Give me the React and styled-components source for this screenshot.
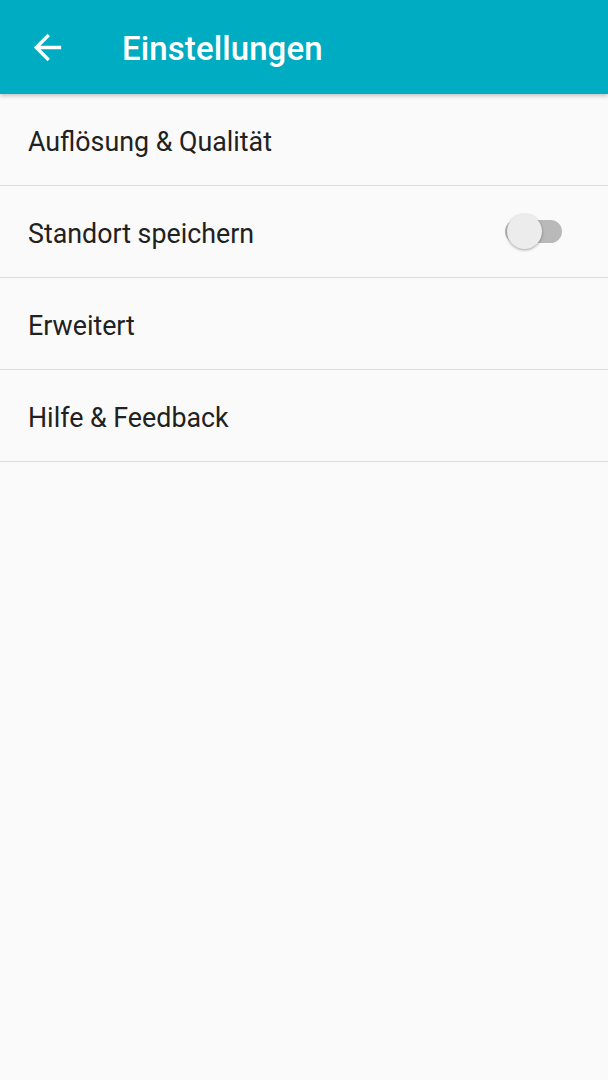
import React from "react";
import styled, { createGlobalStyle } from "styled-components";

const GlobalStyle = createGlobalStyle`
  html, body {
    margin: 0;
    padding: 0;
    background: #fafafa;
  }
  body {
    font-family: Roboto, "Noto Sans", "Liberation Sans", sans-serif;
    -webkit-font-smoothing: antialiased;
  }
`;

const Screen = styled.div`
  width: 608px;
  min-height: 1080px;
  background: #fafafa;
  display: flex;
  flex-direction: column;
`;

const Toolbar = styled.header`
  height: 94px;
  background: #00acc1;
  display: flex;
  align-items: center;
  box-shadow: 0 2px 4px rgba(0, 0, 0, 0.22);
  position: relative;
  z-index: 1;
`;

const BackButton = styled.button`
  width: 41px;
  height: 41px;
  margin-left: 27px;
  padding: 0;
  border: none;
  background: transparent;
  display: flex;
  align-items: center;
  justify-content: center;
  color: #fff;
`;

const Title = styled.h1`
  margin: 2px 0 0 54px;
  font-size: 33px;
  font-weight: 500;
  color: #fff;
  letter-spacing: 0.1px;
`;

const List = styled.div`
  display: flex;
  flex-direction: column;
`;

const Row = styled.div`
  height: 92px;
  box-sizing: border-box;
  border-bottom: 1.5px solid #dddddd;
  display: flex;
  align-items: center;
  justify-content: space-between;
  padding: 0 46px 0 28px;
`;

const Label = styled.span`
  font-size: 26.8px;
  color: #212121;
  padding-top: 4px;
`;

const Switch = styled.div`
  position: relative;
  width: 57px;
  height: 35px;
  display: flex;
  align-items: center;
`;

const Track = styled.div`
  width: 57px;
  height: 23px;
  border-radius: 12px;
  background: ${(p) => (p.$on ? "#80deea" : "#b9b9b9")};
`;

const Thumb = styled.div`
  position: absolute;
  left: ${(p) => (p.$on ? "23px" : "2px")};
  top: 0;
  width: 35px;
  height: 35px;
  border-radius: 50%;
  background: ${(p) => (p.$on ? "#00acc1" : "#ececec")};
  box-shadow: 0 1px 3px rgba(0, 0, 0, 0.35);
`;

const ToggleSwitch = ({ on }) => (
  <Switch>
    <Track $on={on} />
    <Thumb $on={on} />
  </Switch>
);

const BackIcon = () => (
  <svg width="41" height="41" viewBox="0 0 24 24" fill="currentColor">
    <path d="M20 11H7.83l5.59-5.59L12 4l-8 8 8 8 1.41-1.41L7.83 13H20v-2z" />
  </svg>
);

const items = [
  { label: "Auflösung & Qualität" },
  { label: "Standort speichern", toggle: true },
  { label: "Erweitert" },
  { label: "Hilfe & Feedback" },
];

export default function App() {
  return (
    <>
      <GlobalStyle />
      <Screen>
        <Toolbar>
          <BackButton aria-label="Zurück">
            <BackIcon />
          </BackButton>
          <Title>Einstellungen</Title>
        </Toolbar>
        <List>
          {items.map((it) => (
            <Row key={it.label}>
              <Label>{it.label}</Label>
              {it.toggle && <ToggleSwitch on={false} />}
            </Row>
          ))}
        </List>
      </Screen>
    </>
  );
}
